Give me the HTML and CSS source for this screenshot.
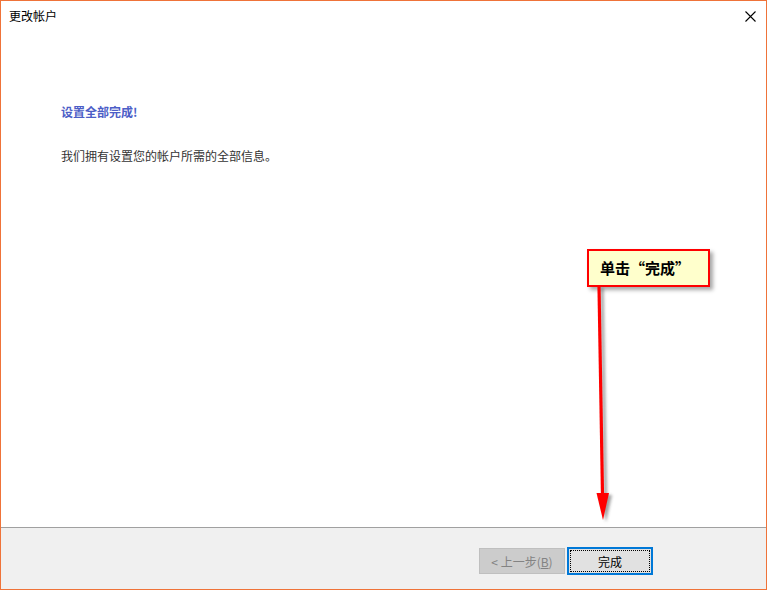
FILE: index.html
```html
<!DOCTYPE html>
<html lang="zh-CN">
<head>
<meta charset="utf-8">
<title>更改帐户</title>
<link rel="stylesheet" href="styles.css">
</head>
<body>
<div class="window">
  <div class="titlebar">
    <span class="title">更改帐户</span>
    <span class="close" aria-label="关闭">
      <svg width="11" height="11" viewBox="0 0 11 11"><path d="M0.5 0.5 L10.5 10.5 M10.5 0.5 L0.5 10.5" stroke="#000" stroke-width="1.1" fill="none"/></svg>
    </span>
  </div>
  <div class="content">
    <div class="heading">设置全部完成!</div>
    <div class="body-text">我们拥有设置您的帐户所需的全部信息。</div>
  </div>
  <div class="footer">
    <button class="btn btn-disabled" disabled>&lt; 上一步(<u>B</u>)</button>
    <button class="btn btn-default"><span class="focus">完成</span></button>
  </div>

  <div class="callout">单击<span class="q">“</span>完成<span class="q">”</span></div>
  <svg class="arrow" width="40" height="250" viewBox="0 0 40 250">
    <defs>
      <filter id="sh" x="-50%" y="-10%" width="200%" height="120%">
        <feGaussianBlur stdDeviation="1.6"/>
      </filter>
    </defs>
    <g transform="translate(3,2)" opacity="0.5" filter="url(#sh)">
      <path d="M9 0 L12.5 209" stroke="#444" stroke-width="3.2" fill="none"/>
      <path d="M6.5 207 L19 207 L13 234 Z" fill="#444"/>
    </g>
    <path d="M9 0 L12.5 209" stroke="#ff0000" stroke-width="3.2" fill="none"/>
    <path d="M6.5 207 L19 207 L13 234 Z" fill="#ff0000"/>
  </svg>
</div>
</body>
</html>
```
FILE: styles.css
```css
* { box-sizing: border-box; }
html, body { margin: 0; padding: 0; background: #fff; }
body {
  font-family: "Noto Sans CJK SC", "Noto Sans", sans-serif;
  font-size: 12px;
  color: #000;
}
.window {
  position: relative;
  width: 767px;
  height: 590px;
  border: 1px solid #ef7339;
  display: flex;
  flex-direction: column;
  background: #fff;
  overflow: hidden;
}
.titlebar {
  height: 29px;
  display: flex;
  justify-content: space-between;
  align-items: flex-start;
  padding: 6px 0 0 8px;
}
.title {
  font-size: 12px;
  line-height: 18px;
  color: #000;
}
.close {
  width: 11px;
  height: 11px;
  margin: 4px 10px 0 0;
  display: block;
}
.close svg { display: block; }
.content {
  flex: 1;
  padding: 72px 0 0 60px;
}
.heading {
  font-weight: bold;
  color: #4c5ec7;
  line-height: 20px;
}
.body-text {
  margin-top: 24px;
  color: #333;
  line-height: 20px;
}
.footer {
  height: 62px;
  border-top: 1px solid #a0a0a0;
  background: #f0f0f0;
  display: flex;
  justify-content: flex-end;
  align-items: flex-start;
  padding: 19px 113px 0 0;
  gap: 2px;
}
.btn {
  font-family: "Noto Sans CJK SC", "Noto Sans", sans-serif;
  font-size: 12px;
  height: 28px;
  width: 86px;
  padding: 0;
  border-radius: 0;
  display: flex;
  align-items: center;
  justify-content: center;
}
.btn-disabled {
  margin-top: 1px;
  height: 26px;
  background: #cccccc;
  border: 1px solid #bfbfbf;
  color: #838383;
}
.btn-disabled u { text-decoration: underline; }
.btn-default {
  background: #e1e1e1;
  border: 2px solid #0078d7;
  color: #000;
  padding: 1px;
}
.btn-default .focus {
  width: 100%;
  height: 100%;
  border: 1px dotted #000;
  display: flex;
  align-items: center;
  justify-content: center;
}
.callout {
  position: absolute;
  left: 586px;
  top: 248px;
  width: 123px;
  height: 38px;
  background: #ffffcc;
  border: 2px solid #ff0000;
  box-shadow: 3px 3px 4px rgba(0, 0, 0, 0.35);
  font-weight: bold;
  font-size: 15px;
  line-height: 34px;
  padding-left: 11px;
  color: #000;
  white-space: nowrap;
}
.callout .q {
  display: inline-block;
  width: 15px;
}
.callout .q:first-of-type { text-align: right; }
.arrow {
  position: absolute;
  left: 589px;
  top: 285px;
}
```
